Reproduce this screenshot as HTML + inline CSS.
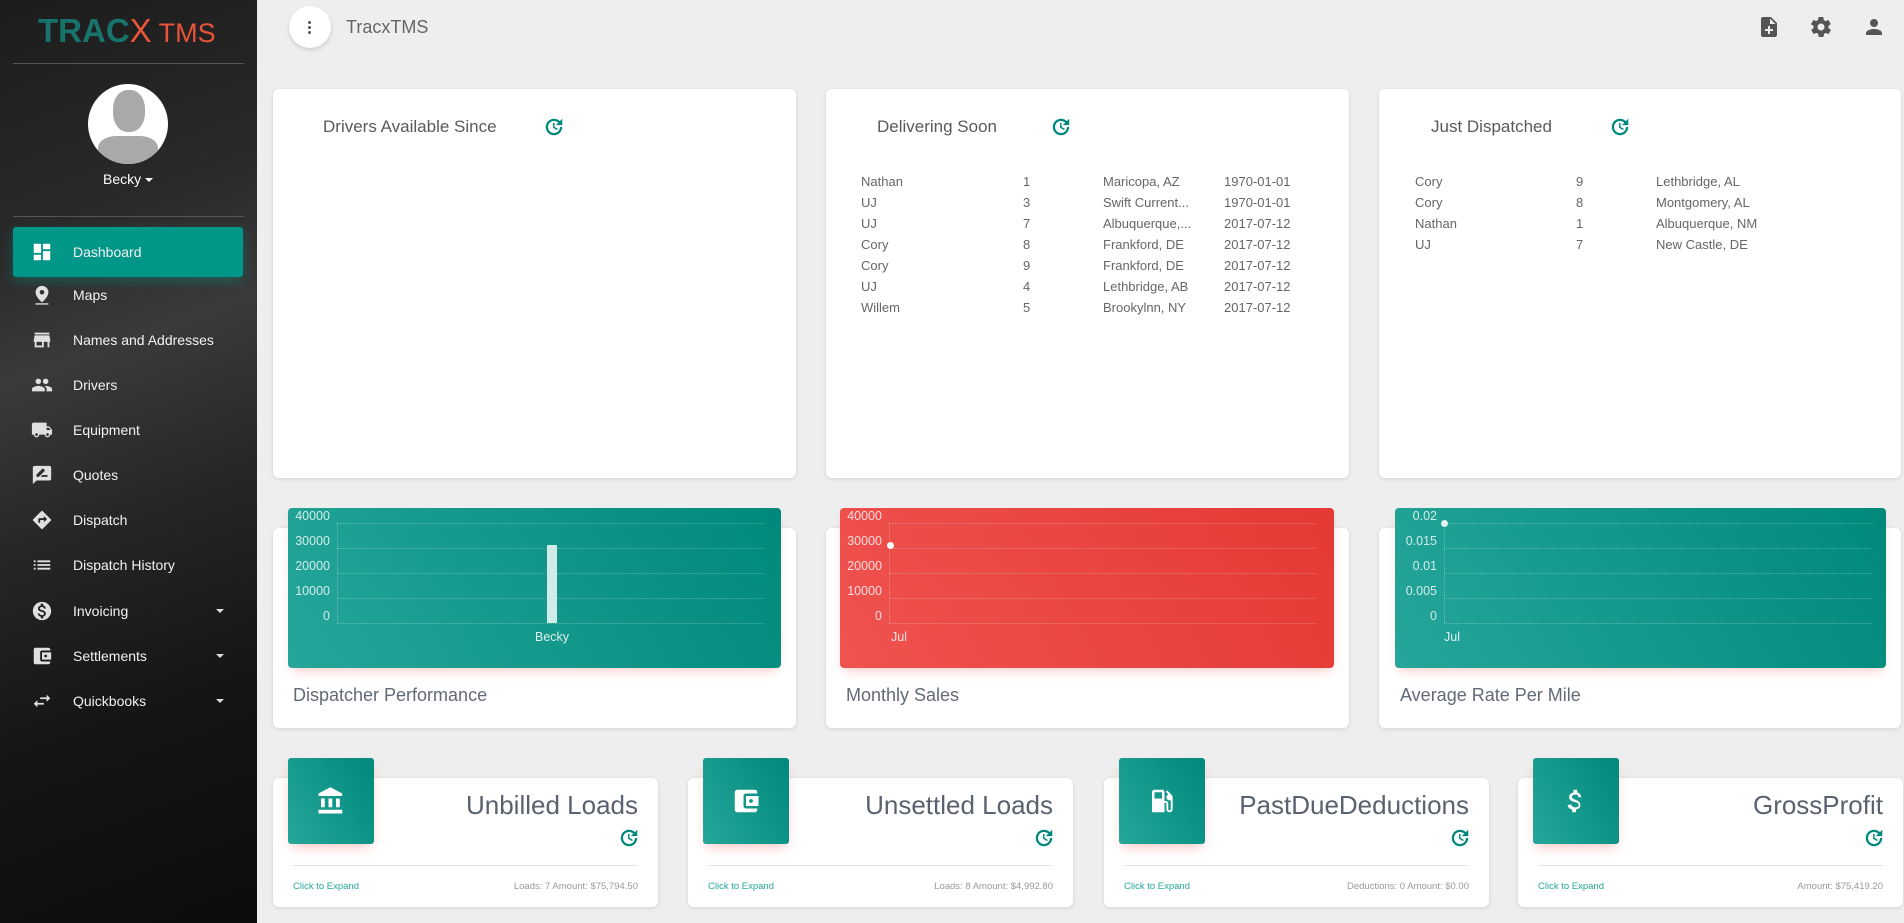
<!DOCTYPE html>
<html><head><meta charset="utf-8"><style>
*{box-sizing:border-box;margin:0;padding:0}
body{width:1904px;height:923px;overflow:hidden;background:#eeeeee;font-family:"Liberation Sans",sans-serif;position:relative}
.abs{position:absolute}
#side{left:0;top:0;width:257px;height:923px;background:linear-gradient(160deg,#1c1c1c 0%,#2a2a2a 25%,#3a3a3a 38%,#262626 55%,#151515 75%,#0c0c0c 100%)}
.hr{position:absolute;left:13px;width:231px;height:1px;background:#555}
.item{position:absolute;left:13px;width:230px;height:44px;color:#f2f2f2;font-size:14px;line-height:44px;padding-left:60px}
.item svg{position:absolute;left:18px;top:11px;width:22px;height:22px;fill:#e0e0e0}
.item .car{position:absolute;left:203px;top:20px;border-left:4px solid transparent;border-right:4px solid transparent;border-top:4px solid #ddd}
.card{position:absolute;background:#fff;border-radius:6px;box-shadow:0 1px 4px rgba(0,0,0,.12)}
.ttl{position:absolute;font-size:17px;color:#5a5a5a}
.rf{position:absolute;width:22px;height:22px}
.tbl{position:absolute;font-size:13px;color:#666}
.tbl div{height:21px;line-height:21px;white-space:nowrap}
.chart{position:absolute;border-radius:4px;box-shadow:0 6px 10px -4px rgba(244,67,54,.3)}
.grn{background:linear-gradient(60deg,#26a69a,#00897b)}
.red{background:linear-gradient(60deg,#ef5350,#e53935)}
.gl{position:absolute;left:49px;width:427px;border-top:1px dotted rgba(255,255,255,.3)}
.yl{position:absolute;width:40px;text-align:right;font-size:12.5px;color:rgba(255,255,255,.8);left:2px}
.xl{position:absolute;font-size:12.5px;color:rgba(255,255,255,.85)}
.clab{position:absolute;font-size:18px;color:#626a76}
.sc{position:absolute;top:778px;width:385px;height:129px;background:#fff;border-radius:6px;box-shadow:0 1px 4px rgba(0,0,0,.12)}
.ib{position:absolute;left:15px;top:-20px;width:86px;height:86px;border-radius:3px;background:linear-gradient(60deg,#26a69a,#00897b);box-shadow:0 6px 12px -4px rgba(244,67,54,.35)}
.ib svg{position:absolute;left:28px;top:28px;width:30px;height:30px;fill:#fff}
.st{position:absolute;right:20px;top:12px;font-size:26px;color:#5a6270}
.sr{position:absolute;right:18px;top:49px;width:22px;height:22px}
.sd{position:absolute;left:20px;right:20px;top:87px;border-top:1px solid #e5e5e5}
.ce{position:absolute;left:20px;top:103px;font-size:9.5px;color:#26a69a}
.am{position:absolute;right:20px;top:103px;font-size:9.5px;color:#999}
</style></head><body>
<svg width="0" height="0" style="position:absolute"><defs>
<symbol id="rf" viewBox="0 0 24 24"><path fill="#00897b" d="M12 3a9 9 0 1 0 9 9h-2.5A6.5 6.5 0 1 1 12 5.5c1.8 0 3.4.7 4.6 1.9L14 10h7V3l-2.6 2.6A9 9 0 0 0 12 3zm-1 4.5v5.3l4.3 2.6.9-1.4-3.6-2.1V7.5z"/></symbol>
</defs></svg>

<div id="side" class="abs">
  <div class="abs" style="left:38px;top:12px;font-size:33px;letter-spacing:0px;color:#17736b;font-weight:bold;">TRAC<span style="color:#e8553a;font-weight:normal">X</span><span style="color:#e8553a;font-size:27px;font-weight:normal"> TMS</span></div>
  <div class="hr" style="top:63px"></div>
  <div class="abs" style="left:88px;top:84px;width:80px;height:80px;border-radius:50%;background:#fff;overflow:hidden">
    <div class="abs" style="left:25px;top:6px;width:32px;height:42px;border-radius:45%;background:#a9a9a9"></div>
    <div class="abs" style="left:10px;top:52px;width:60px;height:40px;border-radius:30% 30% 0 0;background:#a9a9a9"></div>
  </div>
  <div class="abs" style="left:103px;top:171px;color:#fff;font-size:14px">Becky <span style="display:inline-block;border-left:4px solid transparent;border-right:4px solid transparent;border-top:4px solid #fff;vertical-align:middle"></span></div>
  <div class="hr" style="top:216px"></div>
  <div class="item" style="top:227px;height:50px;line-height:50px;background:#009688;border-radius:3px;box-shadow:0 4px 12px rgba(0,150,136,.4)"><svg viewBox="0 0 24 24" style="top:14px"><path d="M3 13h8V3H3zm0 8h8v-6H3zm10 0h8V11h-8zm0-18v6h8V3z" fill="#fff"/></svg>Dashboard</div>
  <div class="item" style="top:273px"><svg viewBox="0 0 24 24"><path d="M12 2C8.1 2 5 5.1 5 9c0 5.2 7 11 7 11s7-5.8 7-11c0-3.9-3.1-7-7-7zm0 9.5a2.5 2.5 0 1 1 0-5 2.5 2.5 0 0 1 0 5zM5 21h14v1.5H5z"/></svg>Maps</div>
  <div class="item" style="top:318px"><svg viewBox="0 0 24 24"><path d="M20 4H4v2h16zm1 10v-2l-1-5H4l-1 5v2h1v6h10v-6h4v6h2v-6zm-9 4H6v-4h6z"/></svg>Names and Addresses</div>
  <div class="item" style="top:363px"><svg viewBox="0 0 24 24"><path d="M16 11a3 3 0 1 0 0-6 3 3 0 0 0 0 6zm-8 0a3 3 0 1 0 0-6 3 3 0 0 0 0 6zm0 2c-2.3 0-7 1.2-7 3.5V19h14v-2.5C15 14.2 10.3 13 8 13zm8 0c-.3 0-.6 0-1 .1 1.2.8 2 1.9 2 3.4V19h6v-2.5c0-2.3-4.7-3.5-7-3.5z"/></svg>Drivers</div>
  <div class="item" style="top:408px"><svg viewBox="0 0 24 24"><path d="M20 8h-3V4H3c-1.1 0-2 .9-2 2v11h2a3 3 0 0 0 6 0h6a3 3 0 0 0 6 0h2v-5zM6 18.5a1.5 1.5 0 1 1 0-3 1.5 1.5 0 0 1 0 3zm12 0a1.5 1.5 0 1 1 0-3 1.5 1.5 0 0 1 0 3zM17 12V9.5h2.5l2 2.5z"/></svg>Equipment</div>
  <div class="item" style="top:453px"><svg viewBox="0 0 24 24"><path d="M20 2H4c-1.1 0-2 .9-2 2v18l4-4h14c1.1 0 2-.9 2-2V4c0-1.1-.9-2-2-2zM6 14v-2.5l6.9-6.9 2.5 2.5L8.5 14zm12 0h-7.5l2-2H18z"/></svg>Quotes</div>
  <div class="item" style="top:498px"><svg viewBox="0 0 24 24"><path d="M21.7 11.3l-9-9a1 1 0 0 0-1.4 0l-9 9a1 1 0 0 0 0 1.4l9 9a1 1 0 0 0 1.4 0l9-9a1 1 0 0 0 0-1.4zM14 14.5V12h-4v3H8v-4c0-.6.4-1 1-1h5V7.5l3.5 3.5z"/></svg>Dispatch</div>
  <div class="item" style="top:543px"><svg viewBox="0 0 24 24"><path d="M3 13h2v-2H3zm0 4h2v-2H3zm0-8h2V7H3zm4 4h14v-2H7zm0 4h14v-2H7zM7 7v2h14V7z"/></svg>Dispatch History</div>
  <div class="item" style="top:589px"><svg viewBox="0 0 24 24"><path d="M12 2a10 10 0 1 0 0 20 10 10 0 0 0 0-20zm1.4 16.1V20h-2.7v-1.9c-1.7-.4-3.2-1.5-3.3-3.4h2c.1 1 .8 1.8 2.6 1.8 1.9 0 2.3-.9 2.3-1.5 0-.8-.4-1.6-2.600-2.1-2.5-.6-4.1-1.6-4.1-3.6 0-1.7 1.3-2.7 3-3.1V4h2.7v1.9c1.8.5 2.8 1.9 2.8 3.5h-2c-.1-1.1-.6-1.8-2.2-1.8-1.5 0-2.4.7-2.4 1.6 0 .8.7 1.4 2.6 1.9s4.1 1.4 4.1 3.9c0 1.8-1.4 2.8-3.1 3.1z"/></svg>Invoicing<span class="car"></span></div>
  <div class="item" style="top:634px"><svg viewBox="0 0 24 24"><path d="M21 18v1c0 1.1-.9 2-2 2H5a2 2 0 0 1-2-2V5c0-1.1.9-2 2-2h14c1.1 0 2 .9 2 2v1h-9a2 2 0 0 0-2 2v8a2 2 0 0 0 2 2zm-9-2h10V8H12zm4-2.5a1.5 1.5 0 1 1 0-3 1.5 1.5 0 0 1 0 3z"/></svg>Settlements<span class="car"></span></div>
  <div class="item" style="top:679px"><svg viewBox="0 0 24 24"><path d="M7 11l-4 4 4 4v-3h7v-2H7zm14-2l-4-4v3h-7v2h7v3z"/></svg>Quickbooks<span class="car"></span></div>
</div>

<div class="abs" style="left:289px;top:6px;width:42px;height:42px;border-radius:50%;background:#fff;box-shadow:0 2px 4px rgba(0,0,0,.15)">
  <div class="abs" style="left:19px;top:15px;width:3px;height:3px;background:#555;border-radius:50%;box-shadow:0 5px 0 #555,0 10px 0 #555"></div></div>
<div class="abs" style="left:346px;top:17px;font-size:18px;color:#666">TracxTMS</div>
<svg class="abs" style="left:1757px;top:15px" width="24" height="24" viewBox="0 0 24 24"><path fill="#555" d="M14 2H6c-1.1 0-2 .9-2 2v16c0 1.1.9 2 2 2h12c1.1 0 2-.9 2-2V8zm2 14h-3v3h-2v-3H8v-2h3v-3h2v3h3zm-3-7V3.5L18.5 9z"/></svg>
<svg class="abs" style="left:1809px;top:15px" width="24" height="24" viewBox="0 0 24 24"><path fill="#555" d="M19.4 13c0-.3.1-.6.1-1s0-.7-.1-1l2.1-1.6c.2-.2.2-.4.1-.6l-2-3.5c-.1-.2-.4-.3-.6-.2l-2.5 1c-.5-.4-1.1-.7-1.7-1l-.4-2.6c0-.3-.2-.5-.5-.5h-4c-.2 0-.5.2-.5.4l-.4 2.7c-.6.2-1.1.6-1.7 1l-2.5-1c-.2-.1-.5 0-.6.2l-2 3.5c-.1.2-.1.5.1.6L4.6 11c0 .3-.1.7-.1 1s0 .7.1 1l-2.1 1.6c-.2.2-.2.4-.1.6l2 3.5c.1.2.4.3.6.2l2.5-1c.5.4 1.1.7 1.7 1l.4 2.6c0 .3.2.5.5.5h4c.2 0 .5-.2.5-.4l.4-2.7c.6-.2 1.2-.6 1.700-1l2.5 1c.2.1.5 0 .6-.2l2-3.5c.1-.2.1-.5-.1-.6zM12 15.5a3.5 3.5 0 1 1 0-7 3.5 3.5 0 0 1 0 7z"/></svg>
<svg class="abs" style="left:1862px;top:15px" width="24" height="24" viewBox="0 0 24 24"><path fill="#555" d="M12 12a4 4 0 1 0 0-8 4 4 0 0 0 0 8zm0 2c-2.7 0-8 1.3-8 4v2h16v-2c0-2.7-5.3-4-8-4z"/></svg>

<div class="card" style="left:273px;top:89px;width:523px;height:389px"></div>
<div class="card" style="left:826px;top:89px;width:523px;height:389px"></div>
<div class="card" style="left:1379px;top:89px;width:522px;height:389px"></div>
<div class="ttl" style="left:323px;top:117px">Drivers Available Since</div>
<svg class="rf" style="left:543px;top:116px"><use href="#rf"/></svg>
<div class="ttl" style="left:877px;top:117px">Delivering Soon</div>
<svg class="rf" style="left:1050px;top:116px"><use href="#rf"/></svg>
<div class="ttl" style="left:1431px;top:117px">Just Dispatched</div>
<svg class="rf" style="left:1609px;top:116px"><use href="#rf"/></svg>

<div class="tbl" style="left:861px;top:171px"><div>Nathan</div><div>UJ</div><div>UJ</div><div>Cory</div><div>Cory</div><div>UJ</div><div>Willem</div></div>
<div class="tbl" style="left:1023px;top:171px"><div>1</div><div>3</div><div>7</div><div>8</div><div>9</div><div>4</div><div>5</div></div>
<div class="tbl" style="left:1103px;top:171px"><div>Maricopa, AZ</div><div>Swift Current...</div><div>Albuquerque,...</div><div>Frankford, DE</div><div>Frankford, DE</div><div>Lethbridge, AB</div><div>Brookylnn, NY</div></div>
<div class="tbl" style="left:1224px;top:171px"><div>1970-01-01</div><div>1970-01-01</div><div>2017-07-12</div><div>2017-07-12</div><div>2017-07-12</div><div>2017-07-12</div><div>2017-07-12</div></div>
<div class="tbl" style="left:1415px;top:171px"><div>Cory</div><div>Cory</div><div>Nathan</div><div>UJ</div></div>
<div class="tbl" style="left:1576px;top:171px"><div>9</div><div>8</div><div>1</div><div>7</div></div>
<div class="tbl" style="left:1656px;top:171px"><div>Lethbridge, AL</div><div>Montgomery, AL</div><div>Albuquerque, NM</div><div>New Castle, DE</div></div>

<div class="card" style="left:273px;top:528px;width:523px;height:200px"></div>
<div class="card" style="left:826px;top:528px;width:523px;height:200px"></div>
<div class="card" style="left:1379px;top:528px;width:522px;height:200px"></div>

<div class="chart grn" style="left:288px;top:508px;width:493px;height:160px">
  <div class="gl" style="top:15px"></div><div class="gl" style="top:40px"></div><div class="gl" style="top:65px"></div><div class="gl" style="top:90px"></div><div class="gl" style="top:115px"></div>
  <div class="abs" style="left:49px;top:15px;height:100px;border-left:1px dotted rgba(255,255,255,.3)"></div>
  <div class="yl" style="top:1px">40000</div><div class="yl" style="top:26px">30000</div><div class="yl" style="top:51px">20000</div><div class="yl" style="top:76px">10000</div><div class="yl" style="top:101px">0</div>
  <div class="abs" style="left:259px;top:37px;width:10px;height:78px;background:#d0ece9"></div>
  <div class="xl" style="left:247px;top:122px">Becky</div>
</div>
<div class="chart red" style="left:840px;top:508px;width:494px;height:160px">
  <div class="gl" style="top:15px"></div><div class="gl" style="top:40px"></div><div class="gl" style="top:65px"></div><div class="gl" style="top:90px"></div><div class="gl" style="top:115px"></div>
  <div class="abs" style="left:49px;top:15px;height:100px;border-left:1px dotted rgba(255,255,255,.3)"></div>
  <div class="yl" style="top:1px">40000</div><div class="yl" style="top:26px">30000</div><div class="yl" style="top:51px">20000</div><div class="yl" style="top:76px">10000</div><div class="yl" style="top:101px">0</div>
  <div class="abs" style="left:47px;top:34px;width:7px;height:7px;border-radius:50%;background:#fff"></div>
  <div class="xl" style="left:51px;top:122px">Jul</div>
</div>
<div class="chart grn" style="left:1395px;top:508px;width:491px;height:160px">
  <div class="gl" style="top:15px"></div><div class="gl" style="top:40px"></div><div class="gl" style="top:65px"></div><div class="gl" style="top:90px"></div><div class="gl" style="top:115px"></div>
  <div class="abs" style="left:49px;top:15px;height:100px;border-left:1px dotted rgba(255,255,255,.3)"></div>
  <div class="yl" style="top:1px">0.02</div><div class="yl" style="top:26px">0.015</div><div class="yl" style="top:51px">0.01</div><div class="yl" style="top:76px">0.005</div><div class="yl" style="top:101px">0</div>
  <div class="abs" style="left:46px;top:12px;width:7px;height:7px;border-radius:50%;background:#e0f2f1"></div>
  <div class="xl" style="left:49px;top:122px">Jul</div>
</div>
<div class="clab" style="left:293px;top:685px">Dispatcher Performance</div>
<div class="clab" style="left:846px;top:685px">Monthly Sales</div>
<div class="clab" style="left:1400px;top:685px">Average Rate Per Mile</div>

<div class="sc" style="left:273px">
  <div class="ib"><svg viewBox="0 0 24 24"><path d="M4 10v7h3v-7zm6 0v7h3v-7zM2 22h19v-3H2zm14-12v7h3v-7zM11.5 1L2 6v2h19V6z"/></svg></div>
  <div class="st">Unbilled Loads</div><svg class="sr"><use href="#rf"/></svg><div class="sd"></div>
  <div class="ce">Click to Expand</div><div class="am">Loads: 7 Amount: $75,794.50</div></div>
<div class="sc" style="left:688px">
  <div class="ib"><svg viewBox="0 0 24 24"><path d="M21 18v1c0 1.1-.9 2-2 2H5a2 2 0 0 1-2-2V5c0-1.1.9-2 2-2h14c1.1 0 2 .9 2 2v1h-9a2 2 0 0 0-2 2v8a2 2 0 0 0 2 2zm-9-2h10V8H12zm4-2.5a1.5 1.5 0 1 1 0-3 1.5 1.5 0 0 1 0 3z"/></svg></div>
  <div class="st">Unsettled Loads</div><svg class="sr"><use href="#rf"/></svg><div class="sd"></div>
  <div class="ce">Click to Expand</div><div class="am">Loads: 8 Amount: $4,992.80</div></div>
<div class="sc" style="left:1104px">
  <div class="ib"><svg viewBox="0 0 24 24"><path d="M19.8 7.2l-3.7-3.7-1.1 1.1 2.1 2.1c-.9.4-1.6 1.300-1.6 2.3a2.5 2.5 0 0 0 2.5 2.5c.4 0 .7-.1 1-.2v7.2a1 1 0 0 1-2 0V14c0-1.1-.9-2-2-2h-1V5c0-1.1-.9-2-2-2H6c-1.1 0-2 .9-2 2v16h10v-7.5h1.5v5a2.5 2.5 0 0 0 5 0V9c0-.7-.3-1.3-.7-1.8zM12 10H6V5h6z"/></svg></div>
  <div class="st">PastDueDeductions</div><svg class="sr"><use href="#rf"/></svg><div class="sd"></div>
  <div class="ce">Click to Expand</div><div class="am">Deductions: 0 Amount: $0.00</div></div>
<div class="sc" style="left:1518px">
  <div class="ib"><svg viewBox="0 0 24 24"><path d="M11.8 10.9c-2.3-.6-3-1.2-3-2.1 0-1.1 1-1.9 2.7-1.9 1.8 0 2.4.8 2.5 2.1h2.2c-.1-1.7-1.1-3.3-3.2-3.8V3h-3v2.2c-1.9.4-3.5 1.7-3.5 3.6 0 2.3 1.9 3.4 4.7 4.1 2.5.6 3 1.5 3 2.4 0 .7-.5 1.8-2.7 1.8-2.1 0-2.9-.9-3-2.1H5.3c.1 2.2 1.8 3.5 3.7 3.9V21h3v-2.2c1.9-.4 3.5-1.5 3.5-3.5 0-2.8-2.4-3.8-4.7-4.4z"/></svg></div>
  <div class="st">GrossProfit</div><svg class="sr"><use href="#rf"/></svg><div class="sd"></div>
  <div class="ce">Click to Expand</div><div class="am">Amount: $75,419.20</div></div>
</body></html>
